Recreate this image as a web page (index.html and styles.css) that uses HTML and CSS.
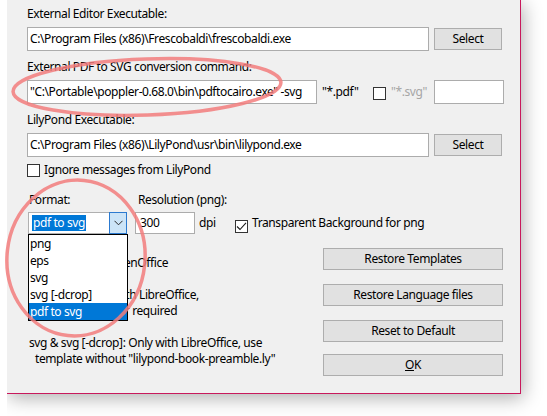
FILE: index.html
```html
<!DOCTYPE html>
<html>
<head>
<meta charset="utf-8">
<link rel="stylesheet" href="styles.css">
</head>
<body>
<div class="viewport">
  <div class="dialog">
    <div class="lbl lbl-first">External Editor Executable:</div>
    <div class="row row-gap">
      <div class="field field-wide">C:\Program Files (x86)\Frescobaldi\frescobaldi.exe</div>
      <div class="btn btn-select">Select</div>
    </div>

    <div class="lbl lbl-next">External PDF to SVG conversion command:</div>
    <div class="row row-gap">
      <div class="field field-cmd">"C:\Portable\poppler-0.68.0\bin\pdftocairo.exe" -svg</div>
      <span class="pdf-ext">"*.pdf"</span>
      <span class="check"></span>
      <span class="disabled">"*.svg"</span>
      <div class="field field-small"></div>
    </div>

    <div class="lbl lbl-next">LilyPond Executable:</div>
    <div class="row row-gap">
      <div class="field field-wide">C:\Program Files (x86)\LilyPond\usr\bin\lilypond.exe</div>
      <div class="btn btn-select">Select</div>
    </div>

    <div class="checkrow">
      <span class="check"></span>
      <span class="check-text">Ignore messages from LilyPond</span>
    </div>

    <div class="format-labels">
      <span class="fmt-label">Format:</span>
      <span class="res-label">Resolution (png):</span>
    </div>
    <div class="format-row">
      <div class="combo">
        <span class="combo-sel">pdf to svg</span>
        <span class="combo-btn">
          <svg width="9" height="6" viewBox="0 0 9 6"><path d="M0.5 0.8 L4.5 4.8 L8.5 0.8" fill="none" stroke="#2b2b2b" stroke-width="1"/></svg>
        </span>
        <ul class="combo-list">
          <li>png</li>
          <li>eps</li>
          <li>svg</li>
          <li>svg [-dcrop]</li>
          <li class="active">pdf to svg</li>
        </ul>
      </div>
      <div class="field field-res">300</div>
      <span class="dpi">dpi</span>
      <span class="check checked"><svg width="11" height="11" viewBox="0 0 11 11"><path d="M1 5.5 L4 8.5 L10 1.8" fill="none" stroke="#1a1a1a" stroke-width="1.1"/></svg></span>
      <span class="check-text">Transparent Background for png</span>
    </div>

    <div class="lower">
      <div class="notes">
        <div class="note">png: Only with OpenOffice</div>
        <div class="note blank">&nbsp;</div>
        <div class="note">pdf to svg: Only with LibreOffice,</div>
        <div class="note note-shift">external converter required</div>
        <div class="note blank">&nbsp;</div>
        <div class="note">svg &amp; svg [-dcrop]: Only with LibreOffice, use</div>
        <div class="note note-indent">template without "lilypond-book-preamble.ly"</div>
      </div>
      <div class="actions">
        <div class="btn btn-wide">Restore Templates</div>
        <div class="btn btn-wide">Restore Language files</div>
        <div class="btn btn-wide">Reset to Default</div>
        <div class="btn btn-wide btn-ok"><span class="u">O</span>K</div>
      </div>
    </div>
  </div>
</div>

<svg class="marks" width="547" height="416" viewBox="0 0 547 416">
  <ellipse cx="147" cy="87" rx="134" ry="28" transform="rotate(-2 147 87)" fill="none" stroke="#f27c7c" stroke-opacity="0.85" stroke-width="3.5"/>
  <ellipse cx="76" cy="258" rx="69" ry="78" transform="rotate(6 76 258)" fill="none" stroke="#f27c7c" stroke-opacity="0.85" stroke-width="3.5"/>
</svg>
</body>
</html>
```

FILE: styles.css
```css
* { box-sizing: border-box; }
html, body { margin: 0; padding: 0; background: #ffffff; }
body {
  position: relative;
  width: 547px;
  height: 416px;
  overflow: hidden;
  font-family: "Noto Sans", "Liberation Sans", sans-serif;
  font-size: 12px;
  letter-spacing: -0.4px;
  line-height: 16px;
  color: #000;
}
.viewport {
  margin-left: 7px;
  width: 540px;
  height: 416px;
  overflow: hidden;
}
.dialog {
  position: relative;
  width: 514px;
  height: 394px;
  background: #f0f0f0;
  border-right: 1px solid #c8195c;
  border-bottom: 1px solid #c8195c;
  box-shadow: 2px 4px 18px rgba(0, 0, 0, 0.32);
  padding: 6px 0 0 20px;
}
.lbl { height: 16px; white-space: nowrap; }
.lbl-next { margin-top: 8px; }
.row { display: flex; align-items: center; height: 24px; }
.row-gap { margin-top: 5px; }
.field {
  height: 24px;
  background: #fff;
  border: 1px solid #acacac;
  padding: 0 2px;
  line-height: 22px;
  white-space: nowrap;
  overflow: hidden;
}
.field-wide { width: 402px; }
.field-cmd { width: 290px; }
.field-small { width: 70px; margin-left: 6px; }
.btn {
  height: 22px;
  background: #e1e1e1;
  border: 1px solid #adadad;
  text-align: center;
  line-height: 20px;
  white-space: nowrap;
}
.btn-select { width: 68px; margin-left: 5px; }
.pdf-ext { margin-left: 5px; width: 46px; }
.check {
  display: inline-flex;
  align-items: center;
  justify-content: center;
  width: 13px;
  height: 13px;
  background: #fff;
  border: 1px solid #333;
  flex: none;
}
.row .check { margin-left: 5px; margin-top: 2px; }
.disabled { color: #a6a6a6; margin-left: 5px; width: 37px; }
.checkrow {
  display: flex;
  align-items: center;
  height: 16px;
  margin-top: 5px;
}
.check-text { margin-left: 4px; white-space: nowrap; }
.format-labels { display: flex; height: 16px; margin-top: 14px; }
.fmt-label { margin-left: 2px; width: 109px; }
.format-row {
  display: flex;
  align-items: center;
  height: 22px;
  margin-top: 4px;
  margin-left: 1px;
  position: relative;
  z-index: 2;
}
.combo {
  position: relative;
  width: 99px;
  height: 22px;
  background: #fff;
  border: 1px solid #b0b0b0;
  border-right: none;
  display: flex;
  align-items: center;
  padding-left: 3px;
}
.combo-sel {
  background: #0078d7;
  color: #fff;
  padding: 0 1px;
  line-height: 16px;
  height: 16px;
}
.combo-btn {
  position: absolute;
  right: 0;
  top: -1px;
  width: 18px;
  height: 22px;
  background: #cce4f7;
  border: 1px solid #2c7ad0;
  display: flex;
  align-items: center;
  justify-content: center;
}
.combo-list {
  position: absolute;
  left: -1px;
  top: 21px;
  width: 100px;
  margin: 0;
  padding: 0;
  list-style: none;
  background: #fff;
  border: 1px solid #000;
}
.combo-list li {
  height: 17px;
  line-height: 17px;
  padding-left: 1px;
}
.combo-list li.active { background: #0078d7; color: #fff; }
.field-res { width: 60px; height: 22px; line-height: 20px; margin-left: 8px; padding-left: 4px; }
.dpi { margin-left: 4px; width: 36px; }
.format-row .check { margin-top: 7px; }
.lower { display: flex; }
.notes { width: 296px; padding-top: 21px; padding-left: 2px; }
.note { height: 16px; white-space: nowrap; }
.note-shift { padding-left: 4px; }
.note-indent { padding-left: 6px; }
.actions {
  display: flex;
  flex-direction: column;
  gap: 14px;
  padding-top: 14px;
}
.btn-wide { width: 180px; }
.btn-ok { margin-top: -2px; }
.u { text-decoration: underline; }
.marks { position: absolute; left: 0; top: 0; pointer-events: none; z-index: 5; }
```
